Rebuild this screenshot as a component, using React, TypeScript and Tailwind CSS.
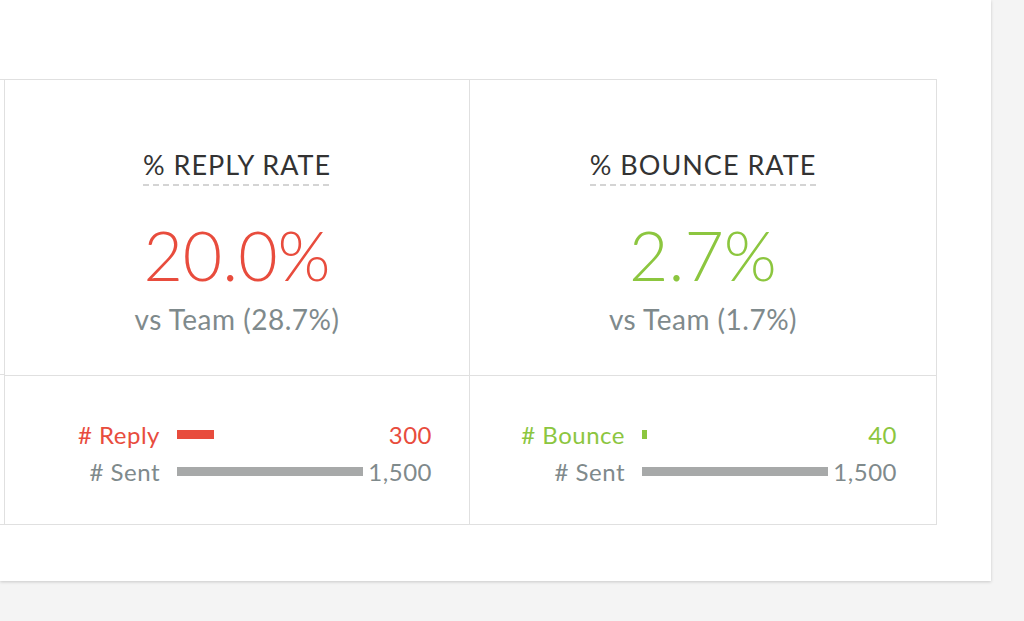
import React from "react";

interface Metric {
  title: string;
  value: string;
  team: string;
  color: string;
  label: string;
  count: number;
  sent: number;
}

const metrics: Metric[] = [
  {
    title: "% REPLY RATE",
    value: "20.0%",
    team: "vs Team (28.7%)",
    color: "text-[#e84c3d]",
    label: "# Reply",
    count: 300,
    sent: 1500,
  },
  {
    title: "% BOUNCE RATE",
    value: "2.7%",
    team: "vs Team (1.7%)",
    color: "text-[#8cc63f]",
    label: "# Bounce",
    count: 40,
    sent: 1500,
  },
];

const BAR_WIDTH = 186;

const MetricTop = ({ m }: { m: Metric }) => (
  <div className="h-[295px] flex flex-col items-center pt-[70px]">
    <div className="flex flex-col items-stretch">
      <span className="text-[27px] leading-[30px] text-[#333] tracking-[1px]">
        {m.title}
      </span>
      <div className="mt-[4px] h-[2px] bg-[repeating-linear-gradient(90deg,#d4d4d4_0_6px,transparent_6px_10px)]" />
    </div>
    <div className={`mt-[36px] text-[68px] leading-[66px] font-light ${m.color}`}>
      {m.value}
    </div>
    <div className="mt-[16px] text-[28px] leading-[30px] text-[#7f8a8c] tracking-[0.5px]">
      {m.team}
    </div>
  </div>
);

const BarRow = ({
  label,
  value,
  width,
  labelColor,
  barColor,
}: {
  label: string;
  value: string;
  width: number;
  labelColor: string;
  barColor: string;
}) => (
  <div className={`flex items-center h-[37px] text-[24px] tracking-[0.5px] ${labelColor}`}>
    <div className="w-[155px] text-right">{label}</div>
    <div className="ml-[17px] w-[186px] flex">
      <div className={`h-[9px] ${barColor}`} style={{ width }} />
    </div>
    <div className="w-[69px] text-right">{value}</div>
  </div>
);

const MetricBottom = ({ m }: { m: Metric }) => {
  const isReply = m.label === "# Reply";
  return (
    <div className="h-[148px] flex flex-col pt-[40px]">
      <BarRow
        label={m.label}
        value={m.count.toLocaleString("en-US")}
        width={Math.max(5, Math.round((m.count / m.sent) * BAR_WIDTH))}
        labelColor={m.color}
        barColor={isReply ? "bg-[#e84c3d]" : "bg-[#8cc63f]"}
      />
      <BarRow
        label="# Sent"
        value={m.sent.toLocaleString("en-US")}
        width={BAR_WIDTH}
        labelColor="text-[#7f8a8c]"
        barColor="bg-[#a7a9a9]"
      />
    </div>
  );
};

export default function App() {
  return (
    <div
      className="w-[1024px] h-[621px] overflow-hidden bg-[#f4f4f4]"
      style={{ fontFamily: "Lato, 'Liberation Sans', sans-serif" }}
    >
      <div className="w-[991px] h-[581px] bg-white shadow-[0_1px_3px_rgba(0,0,0,0.18)] pt-[79px] overflow-hidden">
        <div className="-ml-[461px] w-[1398px] border border-[#e0e0e0] grid grid-cols-[465px_465px_466px]">
          {/* off-screen column */}
          <div className="border-r border-[#e0e0e0]">
            <div className="h-[295px] border-b border-[#e0e0e0]" />
            <div className="h-[148px]" />
          </div>
          {metrics.map((m, i) => (
            <div
              key={m.title}
              className={i === 0 ? "border-r border-[#e0e0e0]" : ""}
            >
              <div className="border-b border-[#e0e0e0]">
                <MetricTop m={m} />
              </div>
              <MetricBottom m={m} />
            </div>
          ))}
        </div>
      </div>
    </div>
  );
}
